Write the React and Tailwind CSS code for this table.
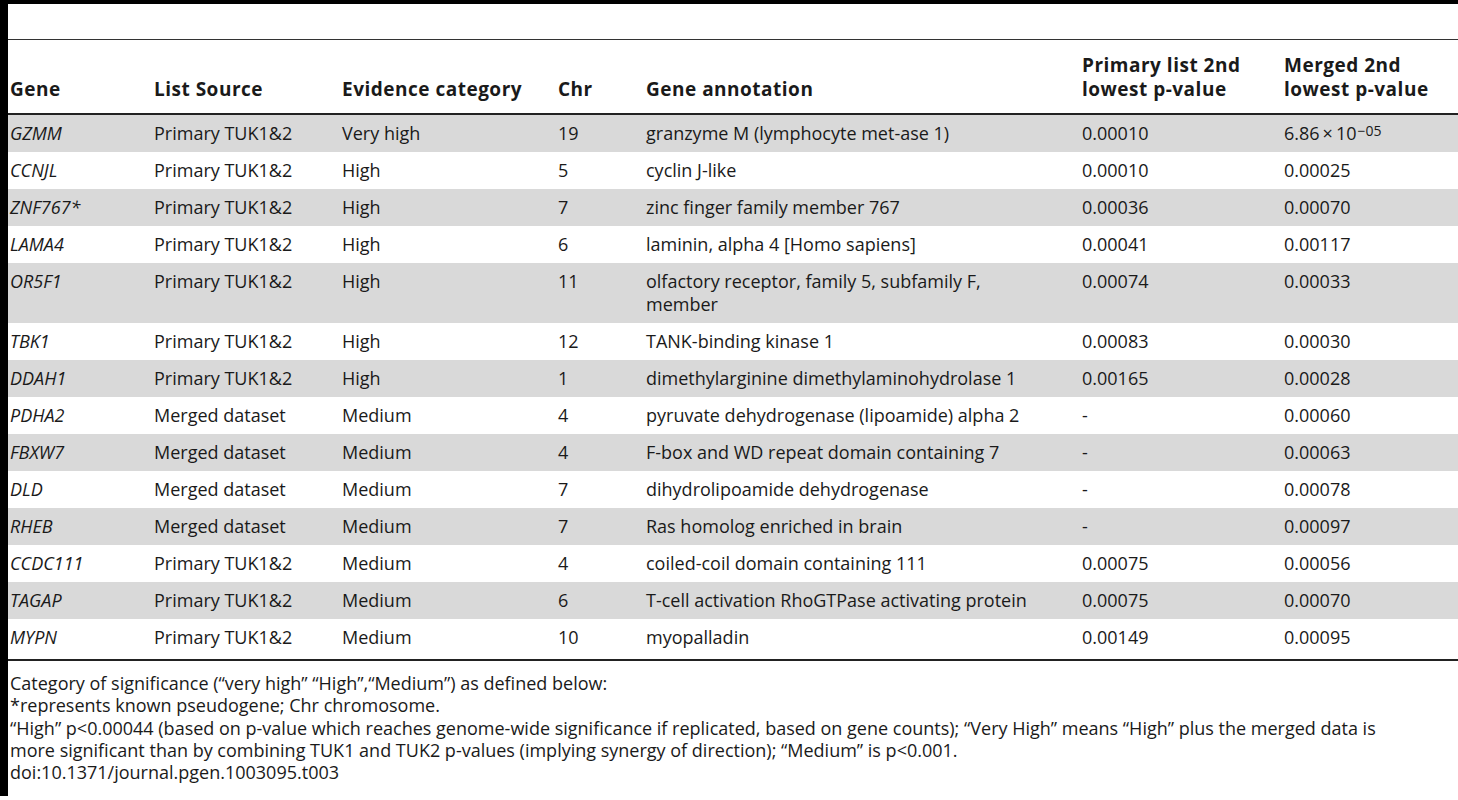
const rows = [
  { gene: 'GZMM', src: 'Primary TUK1&2', ev: 'Very high', chr: '19', ann: 'granzyme M (lymphocyte met-ase 1)', p1: '0.00010', p2: 'sci' },
  { gene: 'CCNJL', src: 'Primary TUK1&2', ev: 'High', chr: '5', ann: 'cyclin J-like', p1: '0.00010', p2: '0.00025' },
  { gene: 'ZNF767*', src: 'Primary TUK1&2', ev: 'High', chr: '7', ann: 'zinc finger family member 767', p1: '0.00036', p2: '0.00070' },
  { gene: 'LAMA4', src: 'Primary TUK1&2', ev: 'High', chr: '6', ann: 'laminin, alpha 4 [Homo sapiens]', p1: '0.00041', p2: '0.00117' },
  { gene: 'OR5F1', src: 'Primary TUK1&2', ev: 'High', chr: '11', ann: ['olfactory receptor, family 5, subfamily F,', 'member'], p1: '0.00074', p2: '0.00033' },
  { gene: 'TBK1', src: 'Primary TUK1&2', ev: 'High', chr: '12', ann: 'TANK-binding kinase 1', p1: '0.00083', p2: '0.00030' },
  { gene: 'DDAH1', src: 'Primary TUK1&2', ev: 'High', chr: '1', ann: 'dimethylarginine dimethylaminohydrolase 1', p1: '0.00165', p2: '0.00028' },
  { gene: 'PDHA2', src: 'Merged dataset', ev: 'Medium', chr: '4', ann: 'pyruvate dehydrogenase (lipoamide) alpha 2', p1: '-', p2: '0.00060' },
  { gene: 'FBXW7', src: 'Merged dataset', ev: 'Medium', chr: '4', ann: 'F-box and WD repeat domain containing 7', p1: '-', p2: '0.00063' },
  { gene: 'DLD', src: 'Merged dataset', ev: 'Medium', chr: '7', ann: 'dihydrolipoamide dehydrogenase', p1: '-', p2: '0.00078' },
  { gene: 'RHEB', src: 'Merged dataset', ev: 'Medium', chr: '7', ann: 'Ras homolog enriched in brain', p1: '-', p2: '0.00097' },
  { gene: 'CCDC111', src: 'Primary TUK1&2', ev: 'Medium', chr: '4', ann: 'coiled-coil domain containing 111', p1: '0.00075', p2: '0.00056' },
  { gene: 'TAGAP', src: 'Primary TUK1&2', ev: 'Medium', chr: '6', ann: 'T-cell activation RhoGTPase activating protein', p1: '0.00075', p2: '0.00070' },
  { gene: 'MYPN', src: 'Primary TUK1&2', ev: 'Medium', chr: '10', ann: 'myopalladin', p1: '0.00149', p2: '0.00095' },
];

export default function App() {
  return (
    <div className="min-h-[800px] bg-white text-[#1a1a1a] font-['Open_Sans',sans-serif]">
      <div className="h-[796px] border-t-4 border-l-8 border-black">
        {/* caption strip */}
        <div className="h-[35px]" />
        <div className="h-px bg-[#333]" />

        <table className="w-full table-fixed border-collapse text-[18px] leading-[23px]">
          <colgroup>
            <col className="w-[144px]" />
            <col className="w-[188px]" />
            <col className="w-[216px]" />
            <col className="w-[88px]" />
            <col className="w-[436px]" />
            <col className="w-[202px]" />
            <col />
          </colgroup>
          <thead>
            <tr className="h-[74px] border-b-2 border-[#222] align-bottom font-bold text-left text-[19px] leading-[24px] tracking-[0.5px]">
              <th className="pl-[2px] pb-[12px]">Gene</th>
              <th className="pl-[2px] pb-[12px]">List Source</th>
              <th className="pl-[2px] pb-[12px]">Evidence category</th>
              <th className="pl-[2px] pb-[12px]">Chr</th>
              <th className="pl-[2px] pb-[12px]">Gene annotation</th>
              <th className="pl-[2px] pb-[12px]">Primary list 2nd<br />lowest p-value</th>
              <th className="pl-[2px] pb-[12px]">Merged 2nd<br />lowest p-value</th>
            </tr>
          </thead>
          <tbody>
            {rows.map((r, i) => {
              const pad = i === rows.length - 1 ? 'pl-[2px] pt-[7px] pb-[10px]' : 'pl-[2px] pt-[7px] pb-[7px]';
              return (
                <tr key={r.gene} className={i % 2 === 0 ? 'bg-[#d9d9d9] align-top' : 'bg-white align-top'}>
                  <td className={`${pad} italic whitespace-nowrap`}>{r.gene}</td>
                  <td className={`${pad} whitespace-nowrap`}>{r.src}</td>
                  <td className={`${pad} whitespace-nowrap`}>{r.ev}</td>
                  <td className={pad}>{r.chr}</td>
                  <td className={`${pad} whitespace-nowrap`}>
                    {Array.isArray(r.ann) ? (
                      <>
                        {r.ann[0]}
                        <br />
                        {r.ann[1]}
                      </>
                    ) : (
                      r.ann
                    )}
                  </td>
                  <td className={pad}>{r.p1}</td>
                  <td className={`${pad} whitespace-nowrap`}>
                    {r.p2 === 'sci' ? (
                      <>
                        6.86{'\u2009'}×{'\u2009'}10
                        <sup className="text-[14px] relative -top-[4px] ml-[1px]">−05</sup>
                      </>
                    ) : (
                      r.p2
                    )}
                  </td>
                </tr>
              );
            })}
          </tbody>
        </table>
        <div className="h-[2px] bg-[#222]" />

        {/* footnotes */}
        <div className="pl-[2px] pt-[11px] text-[18px] leading-[22.3px]">
          <p>Category of significance (“very high” “High”,“Medium”) as defined below:</p>
          <p>*represents known pseudogene; Chr chromosome.</p>
          <p>
            “High” p&lt;0.00044 (based on p-value which reaches genome-wide significance if replicated, based on gene counts); “Very High” means “High” plus the merged data is
            <br />
            more significant than by combining TUK1 and TUK2 p-values (implying synergy of direction); “Medium” is p&lt;0.001.
          </p>
          <p>doi:10.1371/journal.pgen.1003095.t003</p>
        </div>
      </div>
    </div>
  );
}
